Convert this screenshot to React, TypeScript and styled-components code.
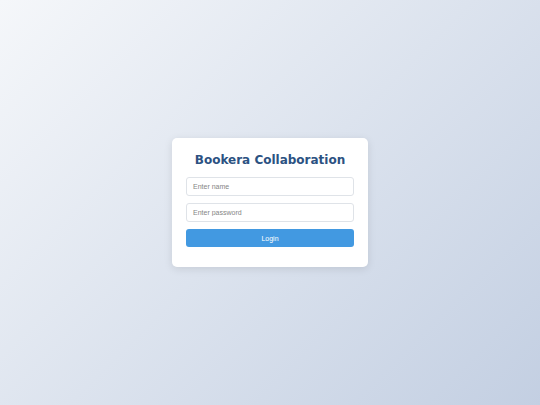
import React from "react";
import styled, { createGlobalStyle } from "styled-components";

const GlobalStyle = createGlobalStyle`
  html, body {
    margin: 0;
    padding: 0;
  }
  body {
    font-family: "Liberation Sans", Arial, sans-serif;
  }
`;

const Page = styled.div`
  width: 540px;
  height: 405px;
  display: flex;
  align-items: center;
  justify-content: center;
  background: linear-gradient(135deg, #f5f7fa 0%, #c3cfe2 100%);
`;

const Card = styled.div`
  width: 196px;
  box-sizing: border-box;
  padding: 13px 14px 20px;
  background: #ffffff;
  border-radius: 5px;
  box-shadow: 0 2px 8px rgba(0, 0, 0, 0.1);
`;

const Title = styled.h1`
  margin: 0 0 8px;
  font-family: "DejaVu Sans", Verdana, sans-serif;
  font-size: 12px;
  font-weight: bold;
  line-height: 18px;
  text-align: center;
  color: #2c5282;
`;

const Form = styled.form`
  display: flex;
  flex-direction: column;
  gap: 7px;
`;

const Input = styled.input`
  height: 19px;
  box-sizing: border-box;
  padding: 0 6px;
  border: 1px solid #dfe3e8;
  border-radius: 3px;
  font-family: "Liberation Sans", Arial, sans-serif;
  font-size: 7px;
  color: #333;
  outline: none;
  &::placeholder {
    color: #858585;
  }
`;

const Button = styled.button`
  height: 18px;
  border: none;
  border-radius: 3px;
  background: #4299e1;
  color: #ffffff;
  font-family: "Liberation Sans", Arial, sans-serif;
  font-size: 7px;
  cursor: pointer;
`;

export default function App() {
  return (
    <>
      <GlobalStyle />
      <Page>
        <Card>
          <Title>Bookera Collaboration</Title>
          <Form onSubmit={(e) => e.preventDefault()}>
            <Input type="text" placeholder="Enter name" />
            <Input type="password" placeholder="Enter password" />
            <Button type="submit">Login</Button>
          </Form>
        </Card>
      </Page>
    </>
  );
}
